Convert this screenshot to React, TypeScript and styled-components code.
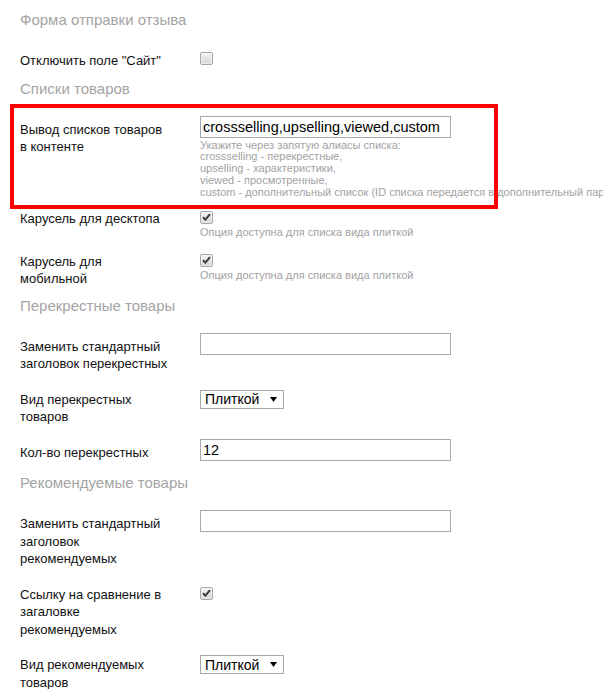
import React from "react";
import styled, { createGlobalStyle } from "styled-components";

const GlobalStyle = createGlobalStyle`
  body {
    margin: 0;
    background: #fff;
    font-family: "Liberation Sans", Arial, sans-serif;
  }
`;

const Page = styled.div`
  width: 603px;
  overflow: hidden;
  padding-top: 10px;
  padding-bottom: 20px;
`;

const SectionTitle = styled.div<{ $top?: number }>`
  padding-left: 20px;
  margin: ${(p) => p.$top ?? 1}px 0 14px;
  font-size: 15px;
  line-height: 18px;
  color: #a4a4a4;
`;

const Row = styled.div<{ $marked?: boolean }>`
  position: relative;
  display: grid;
  grid-template-columns: 200px 1fr;
  align-items: start;
  padding: 9px 0;

  ${(p) =>
    p.$marked &&
    `
    &::after {
      content: "";
      position: absolute;
      left: 10px;
      width: 488px;
      top: -8px;
      bottom: -8.5px;
      box-sizing: border-box;
      border: 4px solid #ff0000;
      pointer-events: none;
    }
  `}
`;

const Label = styled.label`
  padding: 0 28px 0 20px;
  font-size: 13px;
  line-height: 17.5px;
  color: #111;
`;

const Control = styled.div<{ $shift: number }>`
  margin-top: ${(p) => p.$shift}px;
  display: flex;
  flex-direction: column;
  align-items: flex-start;
  min-width: 0;
`;

const TextInput = styled.input`
  box-sizing: border-box;
  width: 251px;
  height: 22px;
  margin: 0;
  padding: 0 2px;
  border: 1px solid #a9a9a9;
  font-family: "Liberation Sans", Arial, sans-serif;
  font-size: 14.5px;
  color: #000;
  outline: none;
`;

const Box = styled.span<{ $checked: boolean }>`
  box-sizing: border-box;
  display: flex;
  align-items: center;
  justify-content: center;
  width: 13px;
  height: 13px;
  border: 1px solid #a6a6a6;
  border-radius: 2px;
  background: linear-gradient(#f2f2f2, #d6d6d6);
  box-shadow: inset 0 0 0 1px rgba(255, 255, 255, 0.5);

  svg {
    display: ${(p) => (p.$checked ? "block" : "none")};
  }
`;

const Hint = styled.div<{ $gap: number; $trim: number }>`
  margin: ${(p) => p.$gap}px 0 ${(p) => -p.$trim}px;
  font-size: 11px;
  line-height: 11.75px;
  color: #a2a2a2;
  white-space: nowrap;
`;

const SelectWrap = styled.div`
  position: relative;
  width: 84px;
  height: 19px;

  svg {
    position: absolute;
    right: 7px;
    top: 7px;
    pointer-events: none;
  }
`;

const Select = styled.select`
  appearance: none;
  box-sizing: border-box;
  width: 100%;
  height: 100%;
  margin: 0;
  padding: 0 0 0 4px;
  border: 1px solid #a9a9a9;
  border-radius: 0;
  background: #fff;
  font-family: "Liberation Sans", Arial, sans-serif;
  font-size: 14px;
  color: #000;
  outline: none;
`;

function Checkbox({ checked }: { checked: boolean }) {
  return (
    <Box $checked={checked} role="checkbox" aria-checked={checked}>
      <svg width="9" height="8" viewBox="0 0 9 8">
        <path
          d="M1 4.2 L3.4 6.6 L8 1.2"
          fill="none"
          stroke="#3a3a3a"
          strokeWidth="2"
        />
      </svg>
    </Box>
  );
}

function TileSelect() {
  return (
    <SelectWrap>
      <Select defaultValue="tile">
        <option value="tile">Плиткой</option>
        <option value="list">Списком</option>
      </Select>
      <svg width="7" height="5" viewBox="0 0 7 5">
        <path d="M0 0 H7 L3.5 5 Z" fill="#000" />
      </svg>
    </SelectWrap>
  );
}

const tileHint = "Опция доступна для списка вида плиткой";

export default function App() {
  return (
    <Page>
      <GlobalStyle />
      <SectionTitle>Форма отправки отзыва</SectionTitle>
      <Row>
        <Label>Отключить поле "Сайт"</Label>
        <Control $shift={0}>
          <Checkbox checked={false} />
        </Control>
      </Row>

      <SectionTitle>Списки товаров</SectionTitle>
      <Row $marked>
        <Label>Вывод списков товаров в контенте</Label>
        <Control $shift={-5}>
          <TextInput defaultValue="crossselling,upselling,viewed,custom" />
          <Hint $gap={2} $trim={6.5}>
            Укажите через запятую алиасы списка:
            <br />
            crossselling - перекрестные,
            <br />
            upselling - характеристики,
            <br />
            viewed - просмотренные,
            <br />
            custom - дополнительный список (ID списка передается в
            дополнительный параметр)
          </Hint>
        </Control>
      </Row>
      <Row>
        <Label>Карусель для десктопа</Label>
        <Control $shift={1}>
          <Checkbox checked />
          <Hint $gap={3} $trim={4}>
            {tileHint}
          </Hint>
        </Control>
      </Row>
      <Row>
        <Label>Карусель для мобильной</Label>
        <Control $shift={1}>
          <Checkbox checked />
          <Hint $gap={3} $trim={4}>
            {tileHint}
          </Hint>
        </Control>
      </Row>

      <SectionTitle $top={0}>Перекрестные товары</SectionTitle>
      <Row>
        <Label>Заменить стандартный заголовок перекрестных</Label>
        <Control $shift={-5}>
          <TextInput defaultValue="" />
        </Control>
      </Row>
      <Row>
        <Label>Вид перекрестных товаров</Label>
        <Control $shift={-1}>
          <TileSelect />
        </Control>
      </Row>
      <Row>
        <Label>Кол-во перекрестных</Label>
        <Control $shift={-5}>
          <TextInput defaultValue="12" />
        </Control>
      </Row>

      <SectionTitle $top={4}>Рекомендуемые товары</SectionTitle>
      <Row>
        <Label>Заменить стандартный заголовок рекомендуемых</Label>
        <Control $shift={-5}>
          <TextInput defaultValue="" />
        </Control>
      </Row>
      <Row>
        <Label>Ссылку на сравнение в загаловке рекомендуемых</Label>
        <Control $shift={1}>
          <Checkbox checked />
        </Control>
      </Row>
      <Row>
        <Label>Вид рекомендуемых товаров</Label>
        <Control $shift={-1}>
          <TileSelect />
        </Control>
      </Row>
    </Page>
  );
}
